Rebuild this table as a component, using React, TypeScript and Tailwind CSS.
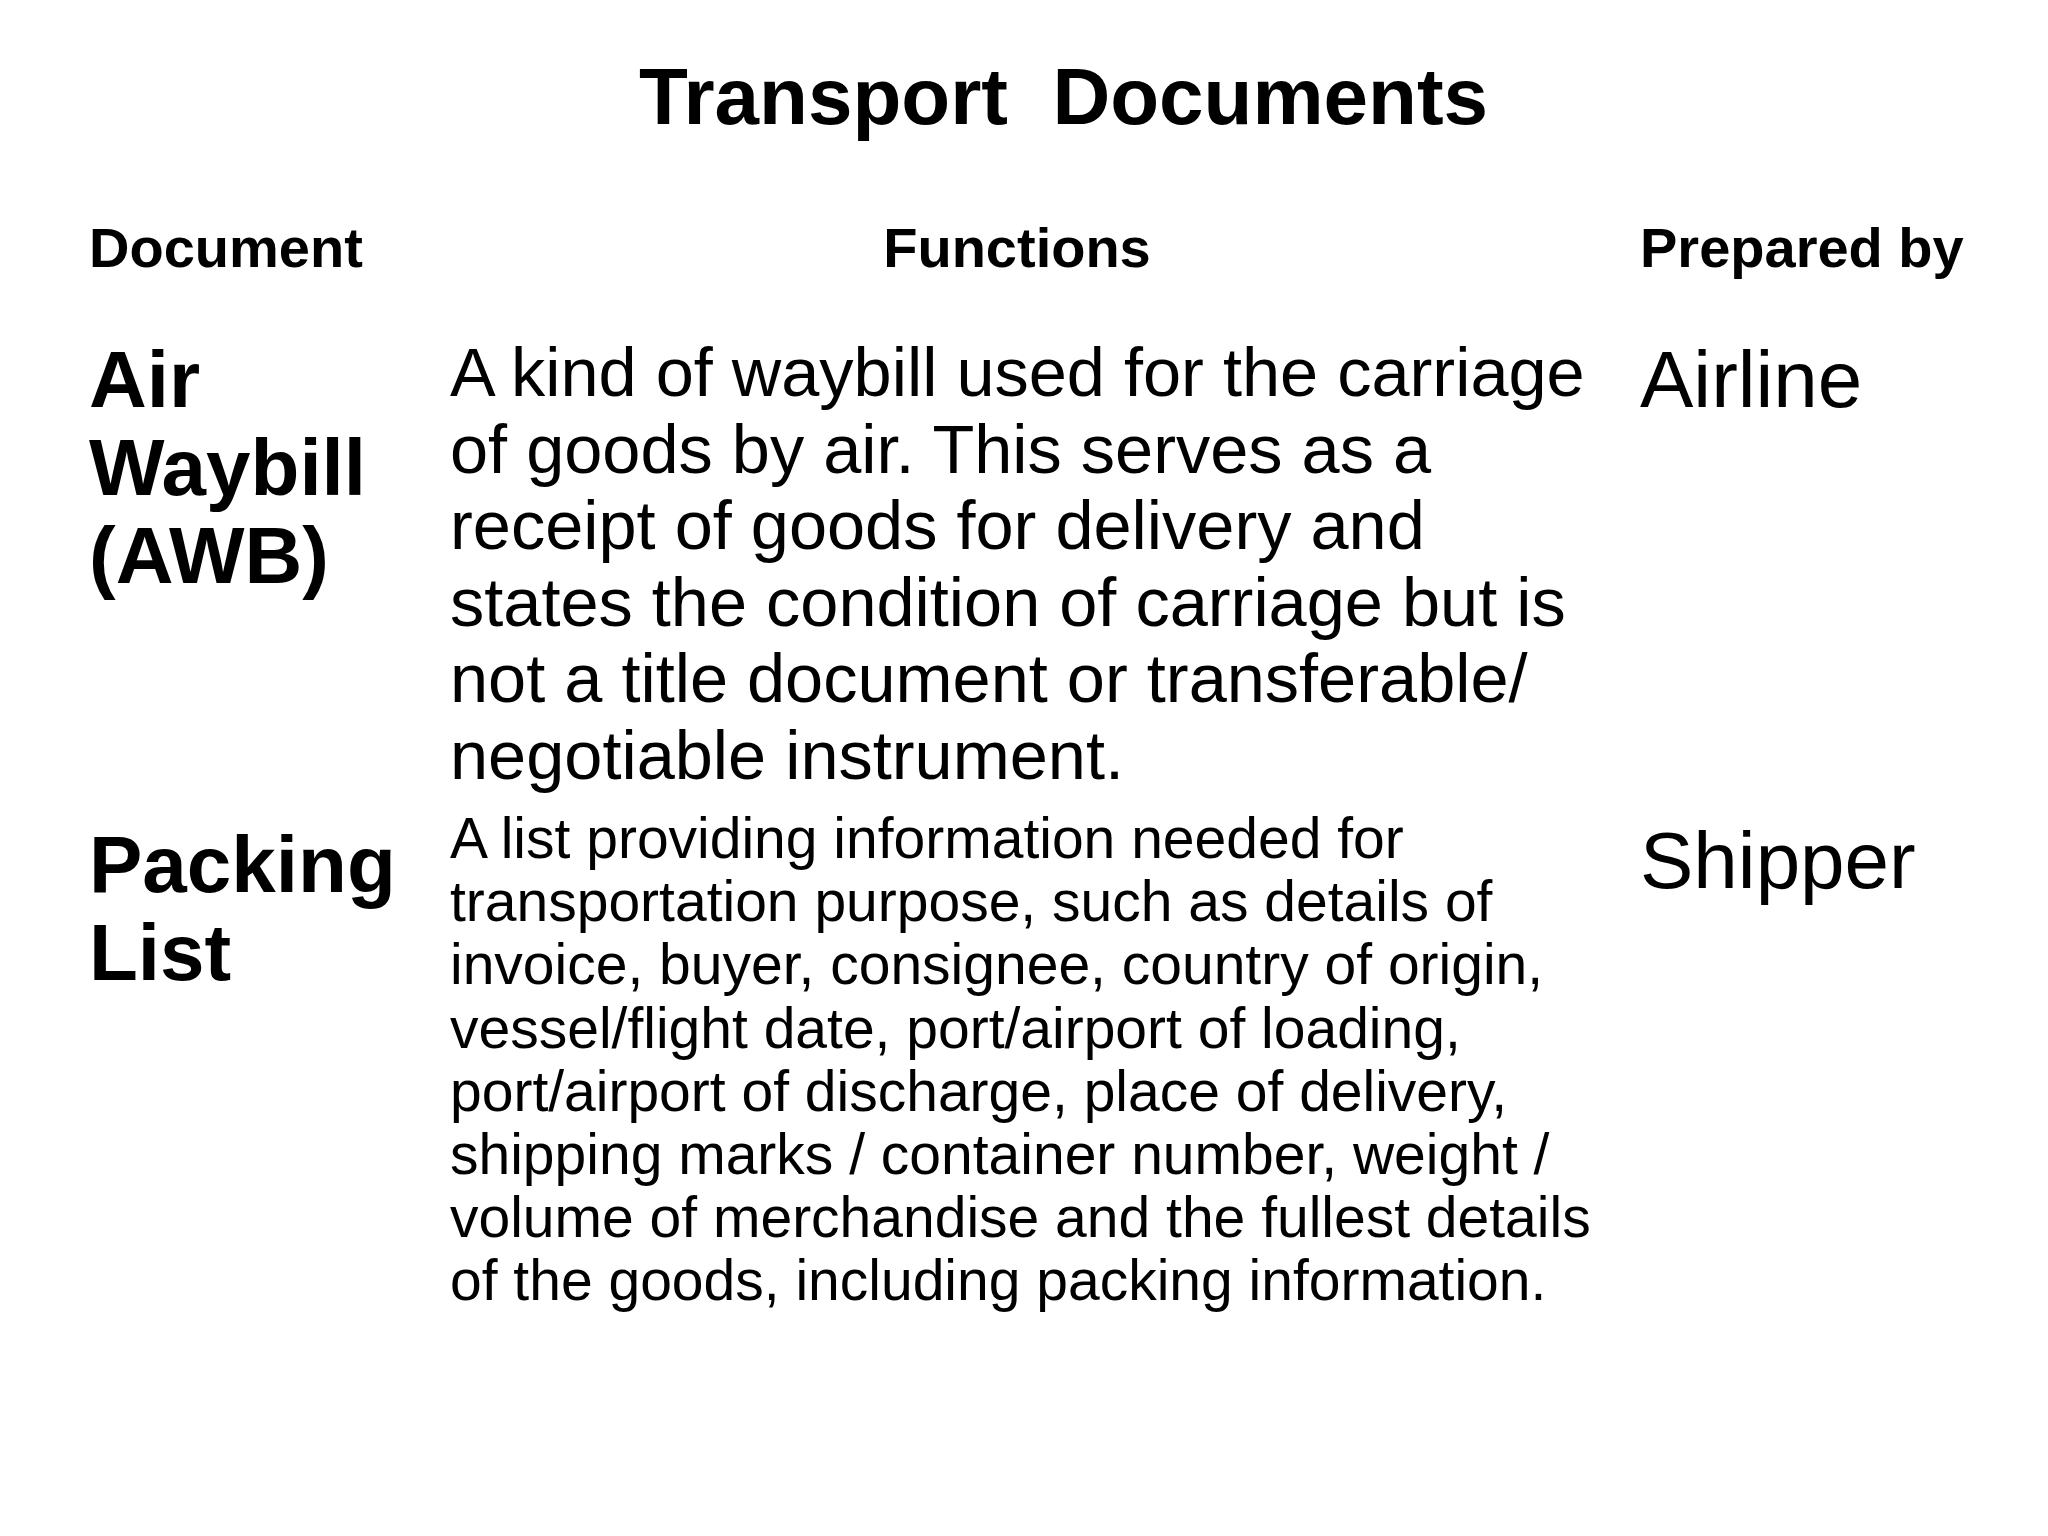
const awbLines = [
  'A kind of waybill used for the carriage',
  'of goods by air. This serves as a',
  'receipt of goods for delivery and',
  'states the condition of carriage but is',
  'not a title document or transferable/',
  'negotiable instrument.',
]

const packingLines = [
  'A list providing information needed for',
  'transportation purpose, such as details of',
  'invoice, buyer, consignee, country of origin,',
  'vessel/flight date, port/airport of loading,',
  'port/airport of discharge, place of delivery,',
  'shipping marks / container number, weight /',
  'volume of merchandise and the fullest details',
  'of the goods, including packing information.',
]

function Lines({ lines }: { lines: string[] }) {
  return (
    <>
      {lines.map((line) => (
        <span key={line} className="block whitespace-nowrap">
          {line}
        </span>
      ))}
    </>
  )
}

export default function App() {
  return (
    <div className="min-h-[1536px] w-[2048px] bg-white text-black font-['Liberation_Sans',Arial,sans-serif]">
      <h1 className="pt-[51px] pl-[639px] text-[80px] leading-[92px] font-bold whitespace-pre">Transport  Documents</h1>

      <div className="grid grid-cols-[361px_1190px_1fr] pl-[89px]">
        {/* header row */}
        <div className="mt-[73px] text-[56px] leading-[64px] font-bold">Document</div>
        <div className="mt-[73px] w-[1134px] text-center text-[56px] leading-[64px] font-bold">Functions</div>
        <div className="mt-[73px] text-[56px] leading-[64px] font-bold whitespace-nowrap">Prepared by</div>

        {/* air waybill */}
        <div className="mt-[56px] text-[80px] leading-[88px] font-bold">
          Air
          <br />
          Waybill
          <br />
          (AWB)
        </div>
        <div className="mt-[55px] text-[68.5px] leading-[76.5px]">
          <Lines lines={awbLines} />
        </div>
        <div className="mt-[56px] text-[80px] leading-[88px]">Airline</div>

        {/* packing list */}
        <div className="mt-[27px] text-[80px] leading-[88px] font-bold">
          Packing
          <br />
          List
        </div>
        <div className="mt-[13px] text-[57px] leading-[63.2px]">
          <Lines lines={packingLines} />
        </div>
        <div className="mt-[23px] text-[80px] leading-[88px]">Shipper</div>
      </div>
    </div>
  )
}
